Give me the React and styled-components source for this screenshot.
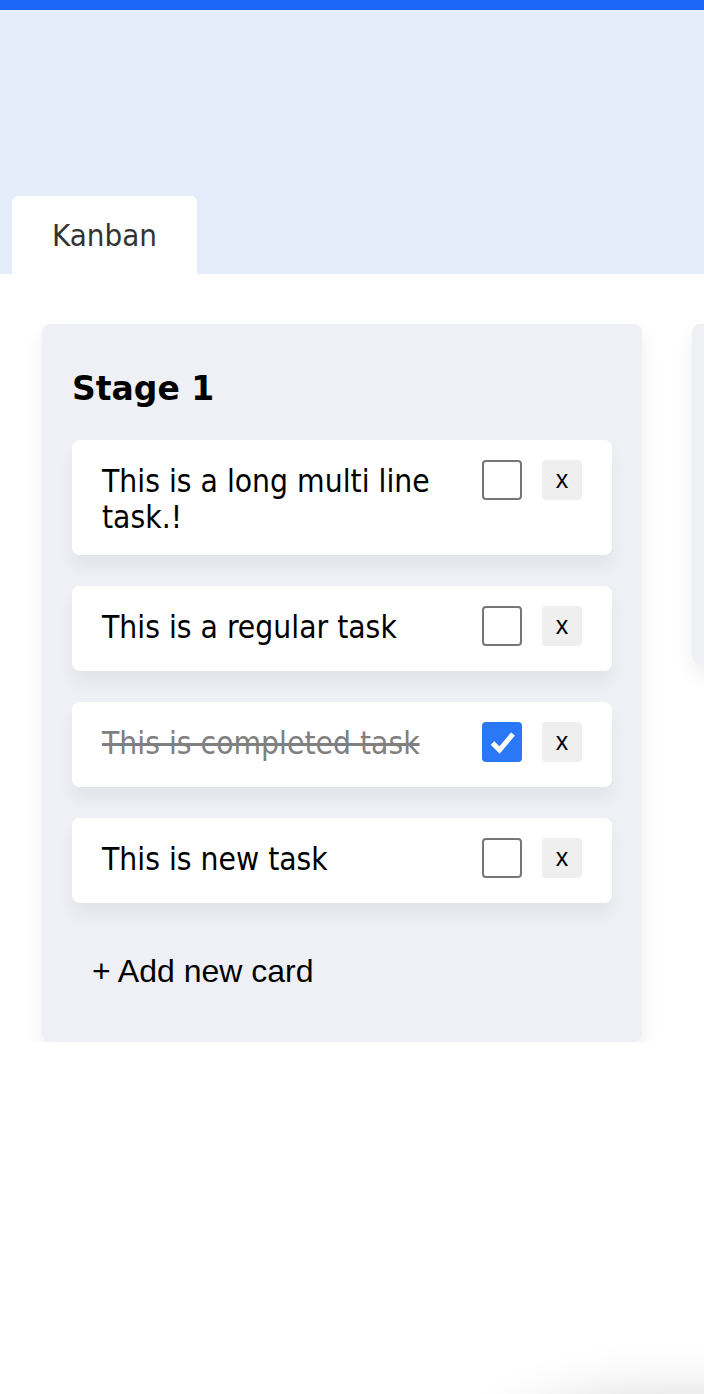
import React from 'react';
import styled, { createGlobalStyle } from 'styled-components';

const GlobalStyle = createGlobalStyle`
  html, body {
    margin: 0;
    padding: 0;
    background: #ffffff;
    overflow: hidden;
  }
  body {
    font-family: "DejaVu Sans Condensed", "DejaVu Sans", sans-serif;
  }
`;

const TopBar = styled.div`
  height: 10px;
  background-color: #1e66f5;
`;

const Header = styled.header`
  height: 264px;
  background-color: #e6edfa;
  display: flex;
  align-items: flex-end;
  padding-left: 12px;
  box-sizing: border-box;
`;

const Tab = styled.div`
  height: 78px;
  padding: 0 40px;
  display: flex;
  align-items: center;
  background-color: #ffffff;
  border-radius: 6px 6px 0 0;
  color: #333;
  font-size: 31px;
`;

const Board = styled.main`
  display: flex;
  gap: 50px;
  padding: 50px 0 0 42px;
  width: max-content;
  align-items: flex-start;
`;

const Column = styled.section`
  width: 600px;
  box-sizing: border-box;
  padding: 30px 30px 38px;
  background-color: #eff0f5;
  border-radius: 8px;
  box-shadow: 0 10px 20px rgba(0, 0, 0, 0.07);
`;

const Title = styled.h2`
  margin: 0 0 24px;
  height: 56px;
  padding-top: 6px;
  display: flex;
  align-items: center;
  font-family: "DejaVu Sans", sans-serif;
  font-size: 33px;
  font-weight: bold;
  color: #000;
`;

const CardList = styled.div`
  display: flex;
  flex-direction: column;
  gap: 31px;
  min-height: ${(p) => (p.$empty ? '85px' : '0')};
`;

const Card = styled.div`
  display: flex;
  align-items: flex-start;
  gap: 20px;
  padding: 20px 30px;
  background-color: #ffffff;
  border-radius: 8px;
  box-shadow: 0 12px 16px rgba(0, 0, 0, 0.05);
`;

const CardText = styled.div`
  flex: 1;
  font-size: 31.5px;
  line-height: 36px;
  padding-top: 3px;
  min-height: 42px;
  color: ${(p) => (p.$done ? '#808080' : '#000')};
  text-decoration: ${(p) => (p.$done ? 'line-through' : 'none')};
`;

const Check = styled.span`
  flex: none;
  width: 40px;
  height: 40px;
  box-sizing: border-box;
  border-radius: 4px;
  border: ${(p) => (p.$checked ? 'none' : '2px solid #767676')};
  background-color: ${(p) => (p.$checked ? '#2b78f6' : '#fff')};
  display: flex;
  align-items: center;
  justify-content: center;
`;

const DeleteButton = styled.button`
  flex: none;
  width: 40px;
  height: 40px;
  border: none;
  border-radius: 4px;
  background-color: #efefef;
  color: #000;
  font-family: "Liberation Sans", Arial, sans-serif;
  font-size: 25px;
  padding: 0 0 2px;
`;

const AddButton = styled.button`
  margin-top: 36px;
  border: none;
  background: transparent;
  padding: 14px 20px;
  font-family: "Liberation Sans", Arial, sans-serif;
  font-size: 32px;
  color: #000;
`;

const Floating = styled.div`
  position: fixed;
  right: -170px;
  bottom: -145px;
  width: 380px;
  height: 140px;
  border-radius: 50%;
  background: #fff;
  box-shadow: 0 0 60px rgba(0, 0, 0, 0.18);
`;

const stages = [
  {
    id: 1,
    title: 'Stage 1',
    tasks: [
      { text: 'This is a long multi line task.!', done: false },
      { text: 'This is a regular task', done: false },
      { text: 'This is completed task', done: true },
      { text: 'This is new task', done: false },
    ],
  },
  // second stage sits mostly past the right edge, only its left rim shows
  { id: 2, title: '', tasks: [], hidden: true },
];

function CheckMark() {
  return (
    <svg width="40" height="40" viewBox="0 0 40 40">
      <path d="M10.5 21l7 7L31 12" fill="none" stroke="#fff" strokeWidth="5" strokeLinejoin="miter" />
    </svg>
  );
}

export default function App() {
  return (
    <>
      <GlobalStyle />
      <TopBar />
      <Header>
        <Tab>Kanban</Tab>
      </Header>
      <Board>
        {stages.map((stage) => (
          <Column key={stage.id}>
            <Title>{stage.title}</Title>
            <CardList $empty={stage.tasks.length === 0}>
              {stage.tasks.map((task) => (
                <Card key={task.text}>
                  <CardText $done={task.done}>{task.text}</CardText>
                  <Check $checked={task.done}>{task.done && <CheckMark />}</Check>
                  <DeleteButton>x</DeleteButton>
                </Card>
              ))}
            </CardList>
            <AddButton>{stage.hidden ? '\u00a0' : '+ Add new card'}</AddButton>
          </Column>
        ))}
      </Board>
      <Floating />
    </>
  );
}
